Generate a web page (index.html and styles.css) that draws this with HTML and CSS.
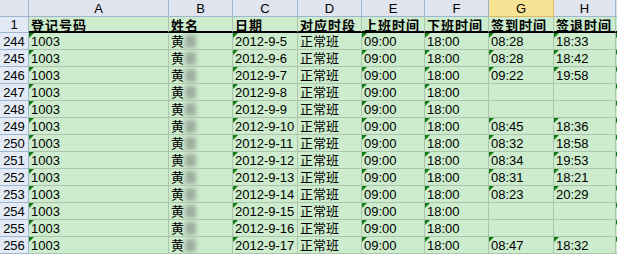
FILE: index.html
```html
<!DOCTYPE html>
<html>
<head>
<meta charset="utf-8">
<link rel="stylesheet" href="styles.css">
</head>
<body>
<div class="sheet">
  <div class="corner"></div><div class="ch">A</div><div class="ch">B</div><div class="ch">C</div><div class="ch">D</div><div class="ch">E</div><div class="ch">F</div><div class="ch sel">G</div><div class="ch">H</div><div class="ch"></div>

  <div class="rh rh1">1</div><div class="c hd">登记号码</div><div class="c hd">姓名</div><div class="c hd">日期</div><div class="c hd">对应时段</div><div class="c hd">上班时间</div><div class="c hd">下班时间</div><div class="c hd">签到时间</div><div class="c hd">签退时间</div><div class="c hd"></div>

  <div class="rh">244</div><div class="c m">1003</div><div class="c">黄<span class="blur"></span></div><div class="c m">2012-9-5</div><div class="c">正常班</div><div class="c m">09:00</div><div class="c m">18:00</div><div class="c m">08:28</div><div class="c m">18:33</div><div class="c m"></div>
  <div class="rh">245</div><div class="c m">1003</div><div class="c">黄<span class="blur"></span></div><div class="c m">2012-9-6</div><div class="c">正常班</div><div class="c m">09:00</div><div class="c m">18:00</div><div class="c m">08:28</div><div class="c m">18:42</div><div class="c m"></div>
  <div class="rh">246</div><div class="c m">1003</div><div class="c">黄<span class="blur"></span></div><div class="c m">2012-9-7</div><div class="c">正常班</div><div class="c m">09:00</div><div class="c m">18:00</div><div class="c m">09:22</div><div class="c m">19:58</div><div class="c m"></div>
  <div class="rh">247</div><div class="c m">1003</div><div class="c">黄<span class="blur"></span></div><div class="c m">2012-9-8</div><div class="c">正常班</div><div class="c m">09:00</div><div class="c m">18:00</div><div class="c"></div><div class="c"></div><div class="c m"></div>
  <div class="rh">248</div><div class="c m">1003</div><div class="c">黄<span class="blur"></span></div><div class="c m">2012-9-9</div><div class="c">正常班</div><div class="c m">09:00</div><div class="c m">18:00</div><div class="c"></div><div class="c"></div><div class="c m"></div>
  <div class="rh">249</div><div class="c m">1003</div><div class="c">黄<span class="blur"></span></div><div class="c m">2012-9-10</div><div class="c">正常班</div><div class="c m">09:00</div><div class="c m">18:00</div><div class="c m">08:45</div><div class="c m">18:36</div><div class="c m"></div>
  <div class="rh">250</div><div class="c m">1003</div><div class="c">黄<span class="blur"></span></div><div class="c m">2012-9-11</div><div class="c">正常班</div><div class="c m">09:00</div><div class="c m">18:00</div><div class="c m">08:32</div><div class="c m">18:58</div><div class="c m"></div>
  <div class="rh">251</div><div class="c m">1003</div><div class="c">黄<span class="blur"></span></div><div class="c m">2012-9-12</div><div class="c">正常班</div><div class="c m">09:00</div><div class="c m">18:00</div><div class="c m">08:34</div><div class="c m">19:53</div><div class="c m"></div>
  <div class="rh">252</div><div class="c m">1003</div><div class="c">黄<span class="blur"></span></div><div class="c m">2012-9-13</div><div class="c">正常班</div><div class="c m">09:00</div><div class="c m">18:00</div><div class="c m">08:31</div><div class="c m">18:21</div><div class="c m"></div>
  <div class="rh">253</div><div class="c m">1003</div><div class="c">黄<span class="blur"></span></div><div class="c m">2012-9-14</div><div class="c">正常班</div><div class="c m">09:00</div><div class="c m">18:00</div><div class="c m">08:23</div><div class="c m">20:29</div><div class="c m"></div>
  <div class="rh">254</div><div class="c m">1003</div><div class="c">黄<span class="blur"></span></div><div class="c m">2012-9-15</div><div class="c">正常班</div><div class="c m">09:00</div><div class="c m">18:00</div><div class="c"></div><div class="c"></div><div class="c m"></div>
  <div class="rh">255</div><div class="c m">1003</div><div class="c">黄<span class="blur"></span></div><div class="c m">2012-9-16</div><div class="c">正常班</div><div class="c m">09:00</div><div class="c m">18:00</div><div class="c"></div><div class="c"></div><div class="c m"></div>
  <div class="rh">256</div><div class="c m">1003</div><div class="c">黄<span class="blur"></span></div><div class="c m">2012-9-17</div><div class="c">正常班</div><div class="c m">09:00</div><div class="c m">18:00</div><div class="c m">08:47</div><div class="c m">18:32</div><div class="c m"></div>
</div>
</body>
</html>
```

FILE: styles.css
```css
html, body {
  margin: 0;
  padding: 0;
  background: #ffffff;
  overflow: hidden;
}

.sheet {
  display: grid;
  grid-template-columns: 29px 140px 64px 65px 64px 63px 64px 65px 62px 60px;
  grid-template-rows: 17px 16px repeat(13, 17px);
  font-family: "Liberation Sans", "Noto Sans CJK SC", sans-serif;
  font-size: 13px;
  color: #000;
  width: 617px;
  height: 255px;
  overflow: hidden;
}

.corner,
.ch,
.rh {
  box-sizing: border-box;
  border-right: 1px solid #9eb6ce;
  border-bottom: 1px solid #9eb6ce;
  background: #dfe4ee;
  text-align: center;
  white-space: nowrap;
  overflow: hidden;
}

.ch {
  padding-top: 1px;
  line-height: 15px;
}

.ch.sel {
  background: #f8e394;
  border-right-color: #e2b862;
  border-bottom-color: #e2b862;
}

.rh {
  background: #e3eaf5;
  line-height: 17px;
}

.rh1 {
  line-height: 15px;
}

.c {
  box-sizing: border-box;
  position: relative;
  background: #cdeccd;
  border-right: 1px solid #adc5ad;
  border-bottom: 1px solid #adc5ad;
  padding-left: 2px;
  line-height: 17px;
  white-space: nowrap;
  overflow: hidden;
}

.hd {
  font-family: "Noto Sans CJK SC", "Liberation Sans", sans-serif;
  font-weight: bold;
  font-size: 13px;
  letter-spacing: 1px;
  line-height: 13px;
  padding-top: 1px;
  border-bottom: 2px solid #000;
}

.m::before {
  content: "";
  position: absolute;
  left: 0;
  top: 0;
  border-top: 5px solid #107c10;
  border-right: 5px solid transparent;
}

.blur {
  display: inline-block;
  width: 11px;
  height: 13px;
  margin-left: 1px;
  vertical-align: -2px;
  background: #9fae9f;
  filter: blur(2px);
}
```
